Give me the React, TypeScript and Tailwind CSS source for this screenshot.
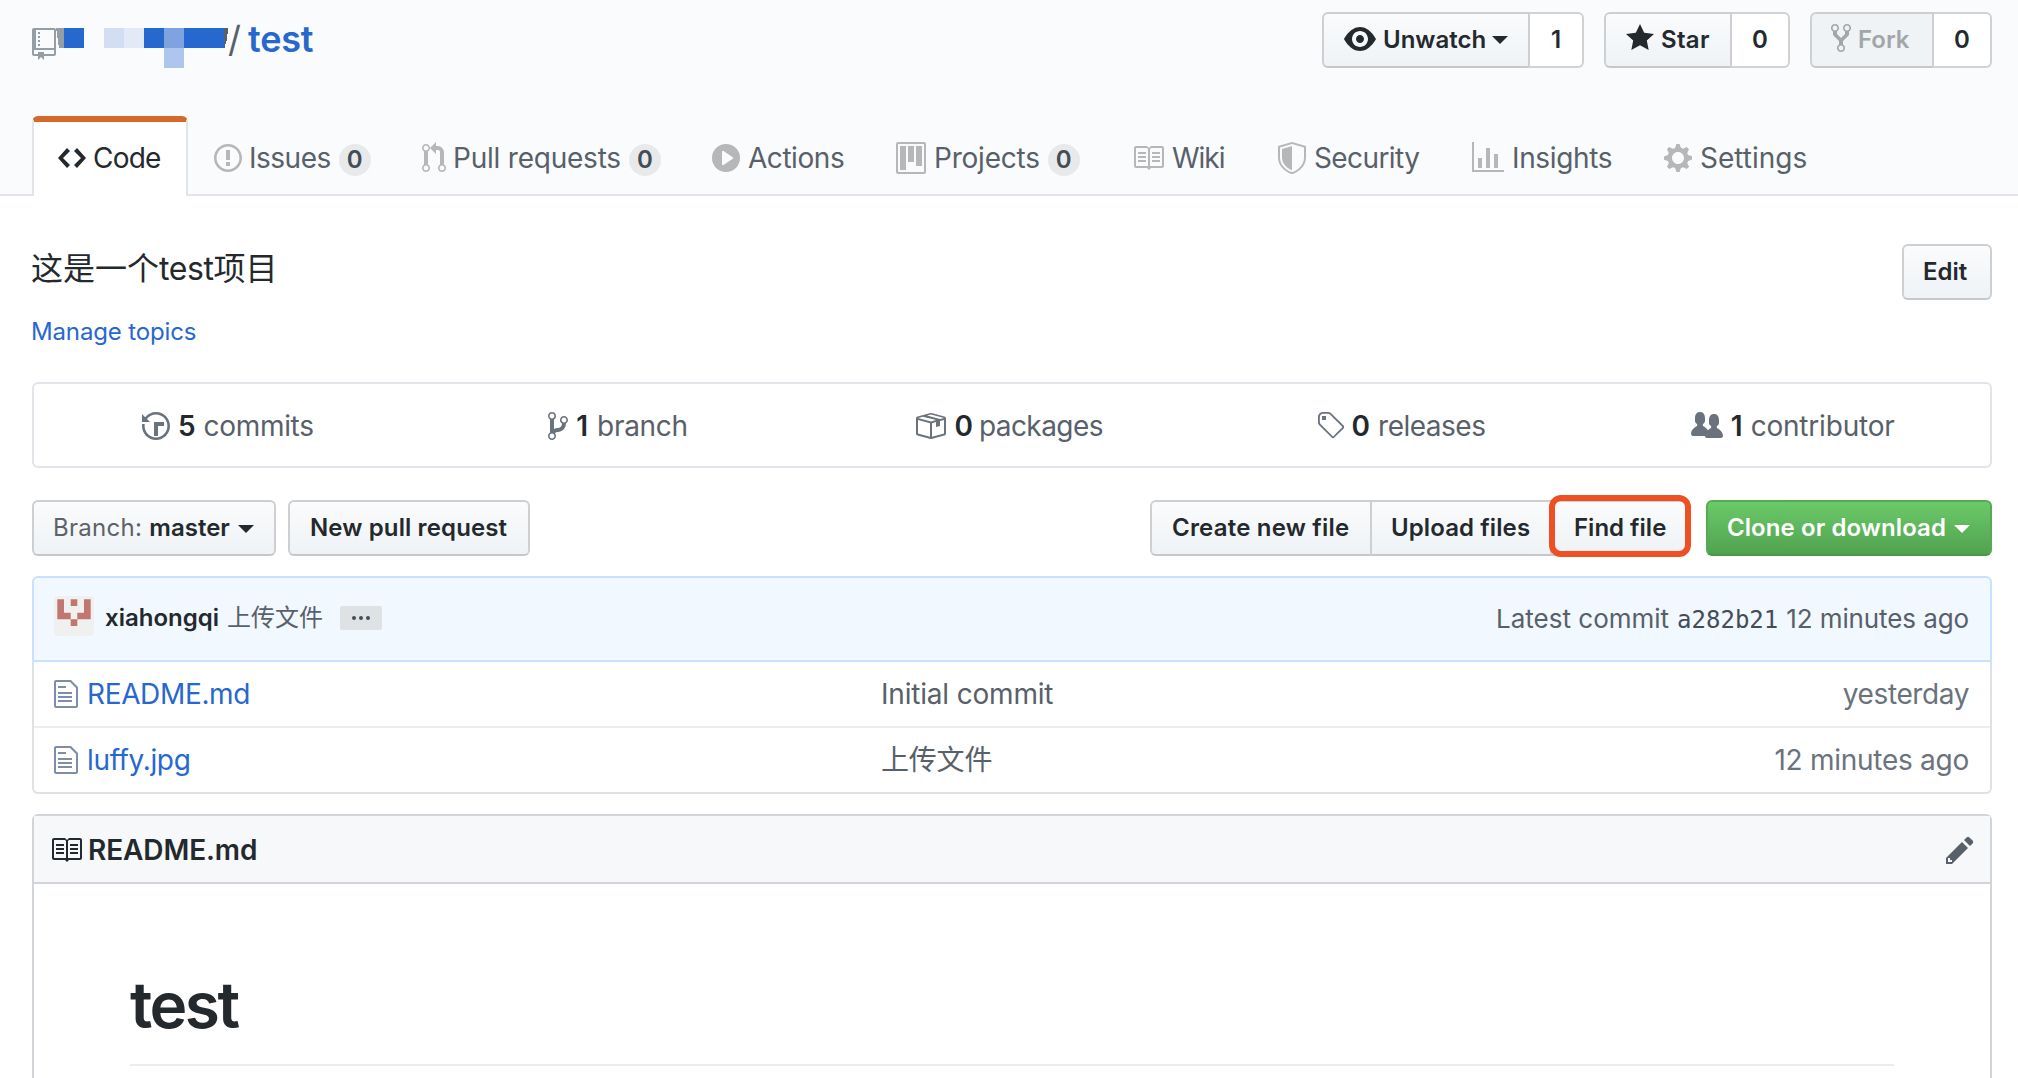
import type { ReactNode } from "react";
import clsx from "clsx";

// 16px-high glyphs, drawn at twice their size: [width, path]
const icons = {
  repo: [12, "M4 9H3V8h1v1zm0-3H3v1h1V6zm0-2H3v1h1V4zm0-2H3v1h1V2zm8-1v12c0 .55-.45 1-1 1H6v2l-1.5-1.5L3 16v-2H1c-.55 0-1-.45-1-1V1c0-.55.45-1 1-1h10c.55 0 1 .45 1 1zm-1 10H1v2h2v-1h3v1h5v-2zm0-10H2v9h9V1z"],
  code: [14, "M9.5 3L8 4.5 11.5 8 8 11.5 9.5 13 14 8 9.5 3zm-5 0L0 8l4.5 5L6 11.5 2.5 8 6 4.5 4.5 3z"],
  issue: [14, "M7 2.3c3.14 0 5.7 2.56 5.7 5.7s-2.56 5.7-5.7 5.7A5.71 5.71 0 0 1 1.3 8c0-3.14 2.56-5.7 5.7-5.7zM7 1C3.14 1 0 4.14 0 8s3.14 7 7 7 7-3.14 7-7-3.14-7-7-7zm1 3H6v5h2V4zm0 6H6v2h2v-2z"],
  pullRequest: [12, "M11 11.28V5c-.03-.78-.34-1.47-.94-2.06C9.46 2.35 8.78 2.03 8 2H7V0L4 3l3 3V4h1c.27.02.48.11.69.31.21.2.3.42.31.69v6.28A1.993 1.993 0 0 0 10 15a1.993 1.993 0 0 0 1-3.72zm-1 2.92c-.66 0-1.2-.55-1.2-1.2 0-.65.55-1.2 1.2-1.2.65 0 1.2.55 1.2 1.2 0 .65-.55 1.2-1.2 1.2zM4 3c0-1.11-.89-2-2-2a1.993 1.993 0 0 0-1 3.72v6.56A1.993 1.993 0 0 0 2 15a1.993 1.993 0 0 0 1-3.72V4.72c.59-.34 1-.98 1-1.72zm-.8 10c0 .66-.55 1.2-1.2 1.2-.65 0-1.2-.55-1.2-1.2 0-.65.55-1.2 1.2-1.2.65 0 1.2.55 1.2 1.2zM2 4.2C1.34 4.2.8 3.65.8 3c0-.65.55-1.2 1.2-1.2.65 0 1.2.55 1.2 1.2 0 .65-.55 1.2-1.2 1.2z"],
  play: [14, "M14 8A7 7 0 1 1 0 8a7 7 0 0 1 14 0zm-8.223 3.482l4.599-3.066a.5.5 0 0 0 0-.832L5.777 4.518A.5.5 0 0 0 5 4.934v6.132a.5.5 0 0 0 .777.416z"],
  project: [15, "M10 12h3V2h-3v10zm-4-2h3V2H6v8zm-4 4h3V2H2v12zm-1 1h13V1H1v14zM14 0H1a1 1 0 0 0-1 1v14a1 1 0 0 0 1 1h13a1 1 0 0 0 1-1V1a1 1 0 0 0-1-1z"],
  book: [16, "M3 5h4v1H3V5zm0 3h4V7H3v1zm0 2h4V9H3v1zm11-5h-4v1h4V5zm0 2h-4v1h4V7zm0 2h-4v1h4V9zm2-6v9c0 .55-.45 1-1 1H9.5l-1 1-1-1H2c-.55 0-1-.45-1-1V3c0-.55.45-1 1-1h5.5l1 1 1-1H15c.55 0 1 .45 1 1zm-8 .5L7.5 3H2v9h6V3.5zm7-.5H9.5l-.5.5V12h6V3z"],
  shield: [14, "M0 2l7-2 7 2v6.02C14 12.69 8.69 16 7 16c-1.69 0-7-3.31-7-7.98V2zm1 .75L7 1l6 1.75v5.268C13 12.104 8.449 15 7 15c-1.449 0-6-2.896-6-6.982V2.75zm1 .75L7 2v12c-1.207 0-5-2.482-5-5.985V3.5z"],
  graph: [16, "M16 14v1H0V0h1v14h15zM5 13H3V8h2v5zm4 0H7V3h2v10zm4 0h-2V6h2v7z"],
  gear: [14, "M14 8.77v-1.6l-1.94-.64-.45-1.09.88-1.84-1.13-1.13-1.81.91-1.09-.45-.69-1.92h-1.6l-.63 1.94-1.11.45-1.84-.88-1.13 1.13.91 1.81-.45 1.09L0 7.23v1.59l1.94.64.45 1.09-.88 1.84 1.13 1.13 1.81-.91 1.09.45.69 1.92h1.59l.63-1.94 1.11-.45 1.84.88 1.13-1.13-.92-1.81.47-1.09L14 8.75v.02zM7 11c-1.66 0-3-1.34-3-3s1.34-3 3-3 3 1.34 3 3-1.34 3-3 3z"],
  eye: [16, "M8.06 2C3 2 0 8 0 8s3 6 8.06 6C13 14 16 8 16 8s-3-6-7.94-6zM8 12c-2.2 0-4-1.78-4-4 0-2.2 1.8-4 4-4 2.22 0 4 1.8 4 4 0 2.22-1.78 4-4 4zm2-4c0 1.11-.89 2-2 2-1.11 0-2-.89-2-2 0-1.11.89-2 2-2 1.11 0 2 .89 2 2z"],
  star: [14, "M14 6l-4.9-.64L7 1 4.9 5.36 0 6l3.6 3.26L2.67 14 7 11.67 11.33 14l-.93-4.74L14 6z"],
  fork: [10, "M8 1a1.993 1.993 0 0 0-1 3.72V6L5 8 3 6V4.72A1.993 1.993 0 0 0 2 1a1.993 1.993 0 0 0-1 3.72V6.5l3 3v1.78A1.993 1.993 0 0 0 5 15a1.993 1.993 0 0 0 1-3.72V9.5l3-3V4.72A1.993 1.993 0 0 0 8 1zM2 4.2C1.34 4.2.8 3.65.8 3c0-.65.55-1.2 1.2-1.2.65 0 1.2.55 1.2 1.2 0 .65-.55 1.2-1.2 1.2zm3 10c-.66 0-1.2-.55-1.2-1.2 0-.65.55-1.2 1.2-1.2.65 0 1.2.55 1.2 1.2 0 .65-.55 1.2-1.2 1.2zm3-10c-.66 0-1.2-.55-1.2-1.2 0-.65.55-1.2 1.2-1.2.65 0 1.2.55 1.2 1.2 0 .65-.55 1.2-1.2 1.2z"],
  history: [14, "M8 13H6V6h5v2H8v5zM7 1C4.81 1 2.87 2.02 1.59 3.59L0 2v4h4L2.5 4.5C3.55 3.17 5.17 2.3 7 2.3c3.14 0 5.7 2.56 5.7 5.7s-2.56 5.7-5.7 5.7A5.71 5.71 0 0 1 1.3 8c0-.34.03-.67.09-1H.08C.03 7.33 0 7.66 0 8c0 3.86 3.14 7 7 7s7-3.14 7-7-3.14-7-7-7z"],
  branch: [10, "M10 5c0-1.11-.89-2-2-2a1.993 1.993 0 0 0-1 3.72v.3c-.02.52-.23.98-.63 1.38-.4.4-.86.61-1.38.63-.83.02-1.48.16-2 .45V4.72a1.993 1.993 0 0 0-1-3.72C.88 1 0 1.89 0 3a2 2 0 0 0 1 1.72v6.56c-.59.35-1 .99-1 1.72 0 1.11.89 2 2 2 1.11 0 2-.89 2-2 0-.53-.2-1-.53-1.36.09-.06.48-.41.59-.47.25-.11.56-.17.94-.17 1.05-.05 1.95-.45 2.75-1.25S8.95 7.77 9 6.73h-.02C9.59 6.37 10 5.73 10 5zM2 1.8c.66 0 1.2.55 1.2 1.2 0 .65-.55 1.2-1.2 1.2C1.35 4.2.8 3.65.8 3c0-.65.55-1.2 1.2-1.2zm0 12.41c-.66 0-1.2-.55-1.2-1.2 0-.65.55-1.2 1.2-1.2.65 0 1.2.55 1.2 1.2 0 .65-.55 1.2-1.2 1.2zm6-8c-.66 0-1.2-.55-1.2-1.2 0-.65.55-1.2 1.2-1.2.65 0 1.2.55 1.2 1.2 0 .65-.55 1.2-1.2 1.2z"],
  package: [16, "M1 4.27v7.47c0 .45.3.84.75.97l6.5 1.73c.16.05.34.05.5 0l6.5-1.73c.45-.13.75-.52.75-.97V4.27c0-.45-.3-.84-.75-.97l-6.5-1.74a1.4 1.4 0 0 0-.5 0L1.75 3.3c-.45.13-.75.52-.75.97zm7 9.09l-6-1.59V5l6 1.61v6.75zM2 4l2.5-.67L11 5.06l-2.5.67L2 4zm13 7.77l-6 1.59V6.61l2-.55V8.5l2-.53V5.53L15 5v6.77zm-2-7.24L6.5 2.8l2-.53L15 4l-2 .53z"],
  tag: [14, "M7.73 1.73C7.26 1.26 6.62 1 5.96 1H3.5C2.13 1 1 2.13 1 3.5v2.47c0 .66.27 1.3.73 1.77l6.06 6.06c.39.39 1.02.39 1.41 0l4.59-4.59a.996.996 0 0 0 0-1.41L7.73 1.73zM2.38 7.09c-.31-.3-.47-.7-.47-1.13V3.5c0-.88.72-1.59 1.59-1.59h2.47c.42 0 .83.16 1.13.47l6.14 6.13-4.73 4.73-6.13-6.15zM3.01 3h2v2H3V3h.01z"],
  people: [16, "M16 12.999c0 .439-.45 1-1 1H7.995c-.539 0-.994-.447-.995-.999H1c-.54 0-1-.561-1-1 0-2.634 3-4 3-4s.229-.409 0-1c-.841-.621-1.058-.59-1-3 .058-2.419 1.367-3 2.5-3s2.442.58 2.5 3c.058 2.41-.159 2.379-1 3-.229.59 0 1 0 1s1.549.711 2.42 2.088C9.196 9.369 10 8.999 10 8.999s.229-.409 0-1c-.841-.62-1.058-.59-1-3 .058-2.419 1.367-3 2.5-3s2.437.581 2.495 3c.059 2.41-.158 2.38-1 3-.229.59 0 1 0 1s3.005 1.366 3.005 4z"],
  file: [12, "M6 5H2V4h4v1zM2 8h7V7H2v1zm0 2h7V9H2v1zm0 2h7v-1H2v1zm10-7.5V14c0 .55-.45 1-1 1H1c-.55 0-1-.45-1-1V2c0-.55.45-1 1-1h7.5L12 4.5zM11 5L8 2H1v12h10V5z"],
  pencil: [14, "M0 12v3h3l8-8-3-3-8 8zm3 2H1v-2h1v1h1v1zm10.3-9.3L12 6 9 3l1.3-1.3a.996.996 0 0 1 1.41 0l1.59 1.59c.39.39.39 1.02 0 1.41z"],
} as const;

type IconName = keyof typeof icons;

function Icon({ name, className }: { name: IconName; className?: string }) {
  const [w, d] = icons[name];
  return (
    <svg width={w * 2} height={32} viewBox={`0 0 ${w} 16`} fill="currentColor" className={clsx("shrink-0", className)}>
      <path fillRule="evenodd" d={d} />
    </svg>
  );
}

function Caret({ className }: { className?: string }) {
  return <span className={clsx("h-0 w-0 border-x-8 border-t-8 border-x-transparent border-t-current", className)} />;
}

const btn =
  "flex h-14 items-center whitespace-nowrap border-2 border-[#cdcfd2] border-b-[#c5c8cb] text-2xl/8 font-semibold text-[#24292e]";
const btnFill = "bg-linear-to-b from-[#fafbfc] to-[#eff3f6]";

function SocialButton({ count, className, children }: { count: number; className: string; children: ReactNode }) {
  return (
    <div className="flex">
      <button className={clsx(btn, "rounded-l-md", className)}>{children}</button>
      <span className="flex h-14 flex-1 items-center justify-center rounded-r-md border-2 border-l-0 border-[#d1d2d3] bg-white text-2xl/8 font-semibold">
        {count}
      </span>
    </div>
  );
}

const tabs: { icon: IconName; label: string; count?: number; box: string; text: string }[] = [
  { icon: "issue", label: "Issues", count: 0, box: "w-[208px]", text: "-ml-px tracking-[-0.5px]" },
  { icon: "pullRequest", label: "Pull requests", count: 0, box: "w-[290px]", text: "-ml-px tracking-[-0.22px]" },
  { icon: "play", label: "Actions", box: "w-[184px]", text: "tracking-[-0.45px]" },
  { icon: "project", label: "Projects", count: 0, box: "w-[236px]", text: "tracking-[-0.22px]" },
  { icon: "book", label: "Wiki", box: "w-[146px]", text: "tracking-[-1px]" },
  { icon: "shield", label: "Security", box: "w-[194px]", text: "tracking-[-0.59px]" },
  { icon: "graph", label: "Insights", box: "w-[192px]", text: "tracking-[-0.36px]" },
  { icon: "gear", label: "Settings", box: "", text: "" },
];

const stats: { icon: IconName; count: number; label: string; box: string; text: string }[] = [
  { icon: "history", count: 5, label: "commits", box: "pl-[108px]", text: "ml-2 tracking-[-0.33px]" },
  { icon: "branch", count: 1, label: "branch", box: "pl-[123px]", text: "ml-[9px] tracking-[-0.29px]" },
  { icon: "package", count: 0, label: "packages", box: "pl-[98px]", text: "ml-[6px] tracking-[-0.56px]" },
  { icon: "tag", count: 0, label: "releases", box: "pl-[108px]", text: "ml-2 tracking-[-0.5px]" },
  { icon: "people", count: 1, label: "contributor", box: "pl-[92px]", text: "ml-2 tracking-[-0.2px]" },
];

const files = [
  { name: "README.md", message: "Initial commit", age: "yesterday", nameText: "tracking-[-0.35px]", ageText: "tracking-[-0.4px]" },
  { name: "luffy.jpg", message: "上传文件", age: "12 minutes ago", nameText: "tracking-[-0.35px]", ageText: "tracking-[-0.27px]" },
];

export default function App() {
  return (
    <div className="h-[1078px] w-[2018px] overflow-hidden bg-white font-[Inter,'Noto_Sans_CJK_SC',sans-serif] text-[#24292e]">
      {/* Repository header */}
      <header className="h-[196px] border-b-2 border-[#e1e4e8] bg-[#fafbfc] px-8">
        <div className="flex h-[116px] items-start justify-between pt-3">
          <h1 className="mt-4 flex text-[36px]/[22px]">
            <Icon name="repo" className="text-[#959da5]" />
            {/* Redacted owner name */}
            <svg width="172" height="40" viewBox="0 0 172 40" shapeRendering="crispEdges">
              <path d="M0 0h8v20H3z" fill="#959da5" />
              <path d="M8 0h20v20H8zM88 0h20v20H88zM128 0h41v20h-41z" fill="#2768cf" />
              <path d="M48 0h20v20H48z" fill="#d2dff2" />
              <path d="M68 0h20v20H68z" fill="#e2e9f7" />
              <path d="M108 0h20v20h-20z" fill="#7fa3e0" />
              <path d="M108 20h20v20h-20z" fill="#aec6ed" />
              <path d="M168 0h4l-1 12-3 8z" fill="#586069" />
            </svg>
            <span className="text-[#586069]">/</span>
            <strong className="ml-[7px] font-semibold tracking-[-0.2px] text-[#2768cf]">test</strong>
          </h1>
          <div className="-mr-[6px] flex gap-5">
            <div className="grid w-[262px]">
              <SocialButton count={1} className={clsx(btnFill, "w-[208px] pl-5")}>
                <Icon name="eye" className="-mt-[2px]" />
                <span className="ml-[7px]">Unwatch</span>
                <Caret className="ml-[6px]" />
              </SocialButton>
            </div>
            <div className="grid w-[186px]">
              <SocialButton count={0} className={clsx(btnFill, "w-[128px] pl-5")}>
                <Icon name="star" className="-mt-1" />
                <span className="ml-[7px] tracking-[0.3px]">Star</span>
              </SocialButton>
            </div>
            <div className="grid w-[182px]">
              <SocialButton count={0} className="w-[124px] bg-[#eff3f6] pl-[19px]">
                <Icon name="fork" className="-mt-1 text-[#a3a6a9]" />
                <span className="ml-[7px] text-[#a3a6a9]">Fork</span>
              </SocialButton>
            </div>
          </div>
        </div>

        <nav className="flex h-20 text-[28px]/8 text-[#586069]">
          <a className="flex w-[156px] items-start gap-[7px] rounded-t-md border-x-2 border-t-[6px] border-x-[#e1e4e8] border-t-[#d5692a] bg-white px-6 pt-5 text-[#24292e]">
            <Icon name="code" />
            <span className="tracking-[-0.8px]">Code</span>
          </a>
          <div className="ml-[26px] flex pt-[26px]">
            {tabs.map((t) => (
              <a key={t.label} className={clsx("flex items-start gap-2 whitespace-nowrap", t.box)}>
                <Icon name={t.icon} className="text-[#b5b7b9]" />
                <span className={t.text}>{t.label}</span>
                {t.count !== undefined && (
                  <span className="mt-[2px] h-8 w-8 rounded-full bg-[#e8e9eb] text-center text-2xl/[31px] font-semibold text-[#444d56]">
                    {t.count}
                  </span>
                )}
              </a>
            ))}
          </div>
        </nav>
      </header>

      <main className="w-[2024px] px-8">
        <div className="flex justify-between pt-12">
          <div className="-ml-px">
            <p className="pt-px text-[32px]/[48px]">
              这是一个<span className="tracking-[-0.4px]">test</span>项目
            </p>
            <a className="mt-[21px] block text-2xl/9 tracking-[-0.15px] text-[#2768cf]">Manage topics</a>
          </div>
          <button className={clsx(btn, btnFill, "w-[90px] rounded-md pl-[19px]")}>Edit</button>
        </div>

        {/* Numbers summary */}
        <ul className="mt-8 grid h-[86px] grid-cols-5 rounded-md border-2 border-[#e1e4e8] text-[28px]/8 text-[#586069]">
          {stats.map((s) => (
            <li key={s.label} className={clsx("flex items-center pt-px", s.box)}>
              <Icon name={s.icon} className="text-[#6a737d]" />
              <b className="ml-2 font-semibold text-[#24292e]">{s.count}</b>
              <span className={s.text}>{s.label}</span>
            </li>
          ))}
        </ul>

        {/* File navigation */}
        <div className="mt-8 flex">
          <button className={clsx(btn, btnFill, "w-[244px] rounded-md pl-[19px]")}>
            <span className="font-normal tracking-[0.3px] text-[#5e6266]">Branch:</span>
            <span className="ml-[7px]">master</span>
            <Caret className="mt-[2px] ml-2" />
          </button>
          <button className={clsx(btn, btnFill, "ml-3 w-[242px] rounded-md pl-5 tracking-[0.12px]")}>New pull request</button>
          <div className="ml-auto flex">
            <button className={clsx(btn, btnFill, "w-[222px] rounded-l-md pl-5 tracking-[0.2px]")}>Create new file</button>
            <button className={clsx(btn, btnFill, "w-[180px] border-l-0 pl-[19px] tracking-[0.1px]")}>Upload files</button>
            <div className="relative">
              <button className={clsx(btn, btnFill, "w-[136px] rounded-r-md border-l-0 pl-[22px]")}>Find file</button>
              <span className="absolute -top-[5px] -left-[3px] h-[62px] w-[142px] rounded-xl border-6 border-[#ee5023]" />
            </div>
          </div>
          <button className="ml-[18px] flex h-14 w-[286px] items-center rounded-md border-2 border-[#58a957] border-b-[#4b964b] bg-linear-to-b from-[#6aca68] to-[#52a250] pl-[19px] text-2xl/8 font-semibold whitespace-nowrap text-white">
            <span className="tracking-[0.08px]">Clone or download</span>
            <Caret className="mt-[2px] ml-2" />
          </button>
        </div>

        {/* Latest commit */}
        <div className="mt-5 flex h-[86px] rounded-t-md border-2 border-[#c8e1ff] bg-[#f1f8ff] pr-[21px] pl-5 text-2xl/8 text-[#586069]">
          <svg width="40" height="40" viewBox="0 0 40 40" className="mt-[18px]">
            <rect width="40" height="40" rx="4" fill="#f0f0f0" />
            <path d="M3.3 3.3H10v13.4h6.7v6.6H3.3zM16.7 3.3h6.6V10h-6.6zM30 3.3h6.7v20H23.3v-6.6H30zM16.7 23.3h6.6V30h-6.6z" fill="#c1766f" />
          </svg>
          <b className="mt-6 ml-[11px] font-semibold text-[#24292e]">xiahongqi</b>
          <span className="mt-6 ml-2">上传文件</span>
          <span className="mt-7 ml-[17px] flex h-6 w-[42px] items-center justify-center gap-[3px] rounded-[2px] bg-[#dfe2e5]">
            <i className="h-1 w-1 rounded-full bg-[#444d56]" />
            <i className="h-1 w-1 rounded-full bg-[#444d56]" />
            <i className="h-1 w-1 rounded-full bg-[#444d56]" />
          </span>
          <div className="mt-[25px] ml-auto flex items-baseline text-[26px]/8 whitespace-nowrap">
            <span>Latest commit</span>
            <span className="ml-2 font-['DejaVu_Sans_Mono',monospace] text-2xl/8 text-[#444d56]">a282b21</span>
            <span className="ml-2 tracking-[-0.1px]">12 minutes ago</span>
          </div>
        </div>

        {/* Files */}
        <div className="rounded-b-md border-2 border-t-0 border-[#dfe2e5] text-[28px]/8">
          {files.map((f, i) => (
            <div key={f.name} className={clsx("flex items-center pr-[21px] pl-5", i === 0 ? "h-16" : "h-[66px] border-t-2 border-[#eaecef]")}>
              <Icon name="file" className="text-[#7c8ea8]" />
              <a className={clsx("ml-[9px] w-[794px] text-[#2768cf]", f.nameText)}>{f.name}</a>
              <span className="tracking-[-0.19px] text-[#586069]">{f.message}</span>
              <span className={clsx("ml-auto text-[#6a737d]", f.ageText)}>{f.age}</span>
            </div>
          ))}
        </div>

        {/* Readme */}
        <section className="mt-5 rounded-t-md border-2 border-b-0 border-[#d1d5da]">
          <div className="flex h-[68px] items-center border-b-2 border-[#d1d5da] bg-[#f6f8fa] pt-px pr-4 pl-4 text-[28px]/8">
            <Icon name="book" />
            <h3 className="ml-[6px] font-semibold tracking-[-0.1px]">README.md</h3>
            <Icon name="pencil" className="ml-auto text-[#586069]" />
          </div>
          <div className="px-24 pt-[81px] pb-24">
            <h1 className="h-[101px] border-b-2 border-[#eaecef] text-[64px]/[80px] font-semibold tracking-[-2.5px]">test</h1>
          </div>
        </section>
      </main>
    </div>
  );
}
